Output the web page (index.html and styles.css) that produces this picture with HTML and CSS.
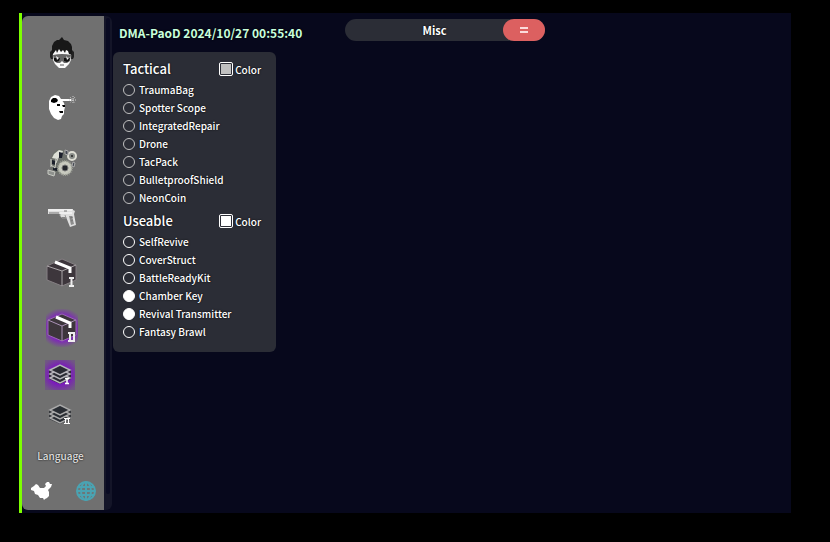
FILE: index.html
```
<!DOCTYPE html>
<html lang="en">
  <head>
    <meta charset="UTF-8" />
    <meta name="viewport" content="width=device-width, initial-scale=1.0" />
    <title>DMA-PaoD</title>
    <link rel="stylesheet" href="styles.css">
  </head>
  <body>
    <div class="app">
      <aside class="sidebar">
        <div class="sidebar-content">
          <nav class="nav">
            <button class="nav-btn" aria-label="Players">
              <svg width="26" height="32" viewBox="0 0 26 32">
                <path d="M4 12h18v11l-2 4-4 4h-6l-4-4-2-4z" fill="#fafafa"/>
                <path d="M3 18L3 9l2-4 3-2 2 0 3-3 2 3 4 1 3 3 1 3v8l-3-1-1-3-2-1-1 3-2-3-2 2-2-3-2 4-1-3-3 4z" fill="#181818"/>
                <path d="M4 18q9-2 18 0l-1 6-3 2h-3l-2-2-2 2H8l-3-2z" fill="#666"/>
                <path d="M5 21h6l-1 3-3 1-2-2zM15 21h6l-1 3-2 1-3-1z" fill="#111"/>
                <path d="M7 19l3 2-2 2zM17 19l2 2 2-1-3 3z" fill="#eee"/>
                <path d="M1 15l2-2 1 9-2 0-1-2zM25 15l-2-2-1 9 2 0 1-2z" fill="#222"/>
                <path d="M11 28h4" stroke="#555"/>
              </svg>
            </button>
            <button class="nav-btn" aria-label="Headshots">
              <svg width="28" height="26" viewBox="0 0 28 26">
                <path d="M1 6l2-4 4-2 4 1 2 3 3 4 1 4-1 4 0 3-2 2-1 3-3 1-4-2-3-4-2-5z" fill="#fff"/>
                <path d="M11 4h12v2H13z" fill="#fff"/>
                <path d="M3 5l2-2h3l2 2-1 2-3 1-3-1zM9 9h3v2H9zM14 10h3v2h-2zM11 16h4v2h-3z" fill="#000"/>
                <path d="M22 2l5 6M27 2l-5 6M25 1v8M21 5h7" stroke="#ccc" stroke-dasharray="1 1"/>
              </svg>
            </button>
            <button class="nav-btn" aria-label="Machines">
              <svg width="30" height="28" viewBox="0 0 30 28">
                <path d="M4 9l2-5 5-4 6 1 3 5 2 12-4 7-8 0-6-5z" fill="#6c706b"/>
                <path d="M5 9l2-4 5-4 4 1-2 5-4 3z" fill="#dddfd6"/>
                <path d="M12 3l4 1-1 5-3 0zM5 11l4 1-1 4-3-1zM6 18l4 1v3l-4-1z" fill="#1b1f2b"/>
                <path d="M4 10v8M9 10l-1 9M11 9l-2 5M4 16l4 3" stroke="#d0d2ca"/>
                <path d="M1 21l7 2-1 4-6-2z" fill="#8e918d" stroke="#c7c9c2"/>
                <circle cx="18" cy="19" r="7" fill="#c8cabf"/>
                <circle cx="18" cy="19" r="7" fill="none" stroke="#9a9d94" stroke-width="2" stroke-dasharray="1 1"/>
                <circle cx="18" cy="19" r="3" fill="#23262c" stroke="#777"/>
                <circle cx="25" cy="7" r="4" fill="#888c88" stroke="#deded4" stroke-width="2"/>
                <circle cx="25" cy="7" r="1" fill="#222"/>
                <path d="M18 1l3 1v4l-3-1zM26 13l2 1-1 4-2-1z" fill="#444952" stroke="#aaa"/>
              </svg>
            </button>
            <button class="nav-btn" aria-label="Weapons">
              <svg width="30" height="20" viewBox="0 0 30 20">
                <path d="M1 1h25v1l2 1-1 3 2 11-6 2-4-10H13V6H1z" fill="#dedede"/>
                <path d="M1 2h24M13 5h12" stroke="#fff"/>
                <path d="M13 6v2l2 2h4l-1-3" fill="none" stroke="#999"/>
                <path d="M22 8l3 0 2 8-3 1z" fill="#8d8d8d"/>
                <path d="M2 5h10M17 3h3M23 10l3-1M24 13l2-1" stroke="#777"/>
              </svg>
            </button>
            <button class="nav-btn" aria-label="Items I">
              <svg width="32" height="30" viewBox="0 0 32 30">
                <path d="M1 8L16 1l14 6v15l-14 6L1 22z" fill="#3d363c" stroke="#857f83"/>
                <path d="M1 8l15 5 14-6M16 13v15" fill="none" stroke="#aaa5a8"/>
                <path d="M9 4l15 6v5" fill="none" stroke="#fff" stroke-width="3"/>
                <path d="M23 20h5M23 28h5M25.500 20v8" fill="none" stroke="#eee" stroke-width="2"/>
              </svg>
            </button>
            <button class="nav-btn" aria-label="Items II">
              <span class="glow glow-box">
                <svg width="32" height="30" viewBox="0 0 32 30">
                  <path d="M2 7l14-6 14 6v15l-14 6L2 22z" fill="#3d363c" stroke="#9a68b5"/>
                  <path d="M2 7l14 6 14-6M16 13v15" fill="none" stroke="#a990b5"/>
                  <path d="M10 4l14 6v5" fill="none" stroke="#fff" stroke-width="3"/>
                  <path d="M22 20h7M22 28h7M24 20v8M28 20v8" fill="none" stroke="#eee" stroke-width="2"/>
                </svg>
              </span>
            </button>
            <button class="nav-btn nav-btn-small" aria-label="Layers I">
              <span class="glow glow-stack">
                <svg width="24" height="22" viewBox="0 0 24 22">
                  <path d="M1 6l11-5 11 5v9l-11 5-11-5z" fill="#30283a"/>
                  <g fill="#292b33" stroke="#b5b4ba" stroke-width="1.500"><path d="M2 14l10-5 10 5-10 5z"/><path d="M2 10l10-5 10 5-10 5z"/><path d="M2 6l10-5 10 5-10 5z"/></g>
                  <path d="M17 14.500h4M17 19.500h4M19 14v6" fill="none" stroke="#fff" stroke-width="1.500"/>
                </svg>
              </span>
            </button>
            <button class="nav-btn nav-btn-small" aria-label="Layers II">
              <span class="stack">
                <svg width="24" height="22" viewBox="0 0 24 22">
                  <path d="M1 6l11-5 11 5v9l-11 5-11-5z" fill="#36383c"/>
                  <g fill="#292d33" stroke="#a9a9a9" stroke-width="1.500"><path d="M2 14l10-5 10 5-10 5z"/><path d="M2 10l10-5 10 5-10 5z"/><path d="M2 6l10-5 10 5-10 5z"/></g>
                  <path d="M16 14.500h6M16 19.500h6M17.500 14v6M20.500 14v6" fill="none" stroke="#fff"/>
                </svg>
              </span>
            </button>
          </nav>

          <div class="language">
            <div class="language-label">Language</div>
            <div class="language-options">
              <button class="lang-btn" aria-label="Chinese">
                <svg width="22" height="18" viewBox="0 0 22 18">
                  <path d="M0 6l3-2 2-2 2 1 2 3 4 0 2-2-1-2 2-2 2 0 1 2 2 0-1 3-2 2-1 1 1 2 0 4-2 2-2 1-1 1-1-2-3 0-2-3-3-1-1-3-3-1z" fill="#fff"/>
                </svg>
              </button>
              <button class="lang-btn" aria-label="English">
                <svg width="20" height="20" viewBox="0 0 20 20">
                  <circle cx="10" cy="10" r="9" fill="#6d7678" stroke="#4aa3b2" stroke-width="2"/>
                  <path d="M10 1v18M1 10h18M2 6h16M2 14h16" stroke="#4aa3b2" stroke-width="2"/>
                  <ellipse cx="10" cy="10" rx="5" ry="9" fill="none" stroke="#4aa3b2" stroke-width="2"/>
                </svg>
              </button>
            </div>
          </div>
        </div>
        <div class="scrollbar"></div>
      </aside>

      <main class="main">
        <header class="topbar">
          <h1 class="title">DMA-PaoD 2024/10/27 00:55:40</h1>
          <div class="tab">
            <span class="tab-name">Misc</span>
            <button class="tab-menu" aria-label="Menu">
              <svg width="8" height="6" viewBox="0 0 8 6"><path d="M0 1h8M0 5h8" stroke="#fbdcdc" stroke-width="2"/></svg>
            </button>
          </div>
        </header>

        <section class="panel">
          <div class="group group-muted">
            <div class="group-header">
              <h2>Tactical</h2>
              <label class="color"><input type="color" value="#c0c0c0">Color</label>
            </div>
            <label class="option"><input type="checkbox">TraumaBag</label>
            <label class="option"><input type="checkbox">Spotter Scope</label>
            <label class="option"><input type="checkbox">IntegratedRepair</label>
            <label class="option"><input type="checkbox">Drone</label>
            <label class="option"><input type="checkbox">TacPack</label>
            <label class="option"><input type="checkbox">BulletproofShield</label>
            <label class="option"><input type="checkbox">NeonCoin</label>
          </div>
          <div class="group">
            <div class="group-header">
              <h2>Useable</h2>
              <label class="color"><input type="color" value="#ffffff">Color</label>
            </div>
            <label class="option"><input type="checkbox">SelfRevive</label>
            <label class="option"><input type="checkbox">CoverStruct</label>
            <label class="option"><input type="checkbox">BattleReadyKit</label>
            <label class="option"><input type="checkbox" checked>Chamber Key</label>
            <label class="option"><input type="checkbox" checked>Revival Transmitter</label>
            <label class="option"><input type="checkbox">Fantasy Brawl</label>
          </div>
        </section>
      </main>
    </div>
  </body>
</html>
```
FILE: styles.css
```
* {
  box-sizing: border-box;
}

body {
  margin: 0;
  min-height: 100vh;
  padding: 13px 39px 29px 19px;
  display: flex;
  background: #000;
  color: #fff;
  font-family: "Noto Sans CJK SC", "Noto Sans", sans-serif;
  font-size: 10px;
  font-weight: 500;
  text-shadow: 0 0 2px #000;
}

button {
  padding: 0;
  border: none;
  background: none;
  cursor: pointer;
}

svg {
  display: block;
}

.app {
  flex: 1;
  display: flex;
  background: #07081c;
  border-left: 3px solid #7dff00;
}

.sidebar {
  display: flex;
  width: 90px;
  margin: 3px 0;
  border-radius: 6px;
  overflow: hidden;
  background: #141528;
}

.sidebar-content {
  flex: 1;
  display: flex;
  flex-direction: column;
  padding-top: 9px;
  background: #707070;
}

.scrollbar {
  width: 4px;
  margin: 2px 2px 16px;
  border-radius: 2px;
  background: #090a22;
}

.nav {
  display: flex;
  flex-direction: column;
  padding-right: 2px;
}

.nav-btn {
  display: flex;
  align-items: center;
  justify-content: center;
  height: 55px;
}

.nav-btn-small {
  height: 40px;
}

.glow {
  display: flex;
  align-items: center;
  justify-content: center;
}

.glow-box {
  width: 32px;
  height: 38px;
  background: radial-gradient(22px 20px, #8020c0 60%, #70707000);
}

.glow-stack {
  width: 30px;
  height: 30px;
  margin-right: 4px;
  background: radial-gradient(20px 18px, #7b18bd 50%, #705882);
}

.stack {
  margin-right: 4px;
}

.language-label {
  padding-right: 5px;
  line-height: 42px;
  text-align: center;
  color: #ddd;
}

.language-options {
  display: flex;
  justify-content: space-between;
  margin-top: 2px;
  padding: 0 8px 0 9px;
}

.lang-btn {
  display: flex;
  align-items: center;
  height: 24px;
}

.main {
  flex: 1;
  padding: 6px 1px;
}

.topbar {
  display: grid;
  grid-template-columns: 232px 200px;
  margin-bottom: 8px;
}

.title {
  margin: 3px 0 0 6px;
  font-size: 12px;
  font-weight: 700;
  line-height: 22px;
  color: #c8ffdc;
}

.tab {
  display: flex;
  height: 22px;
  border-radius: 11px;
  background: #2b2d36;
}

.tab-name {
  flex: 1;
  padding-left: 21px;
  font-size: 11px;
  font-weight: 700;
  line-height: 22px;
  text-align: center;
}

.tab-menu {
  display: flex;
  align-items: center;
  justify-content: center;
  width: 42px;
  border-radius: 11px;
  background: #dc6060;
}

.panel {
  display: flex;
  flex-direction: column;
  gap: 2px;
  width: 163px;
  padding: 5px 10px 11px;
  border-radius: 6px;
  background: #2b2d36;
}

.group-header {
  display: flex;
  align-items: center;
  justify-content: space-between;
  height: 24px;
  padding-right: 5px;
}

.group-header h2 {
  margin: 0;
  font-size: 13px;
  font-weight: 500;
  line-height: 24px;
}

.color {
  display: flex;
  align-items: center;
  gap: 2px;
}

.color input {
  appearance: none;
  width: 14px;
  height: 14px;
  margin: 0;
  padding: 1px;
  border: 1px solid #fff;
  border-radius: 2px;
  background: #2b2d36;
}

.color input::-webkit-color-swatch-wrapper {
  padding: 0;
}

.color input::-webkit-color-swatch {
  border: none;
}

.option {
  display: flex;
  align-items: center;
  gap: 4px;
  height: 18px;
  line-height: 18px;
}

.option input {
  appearance: none;
  width: 12px;
  height: 12px;
  margin: 0;
  border: 1px solid #fff;
  border-radius: 50%;
}

.option input:checked {
  background: #fff;
}

.group-muted .option input {
  border-color: #c0c0c0;
}
```
